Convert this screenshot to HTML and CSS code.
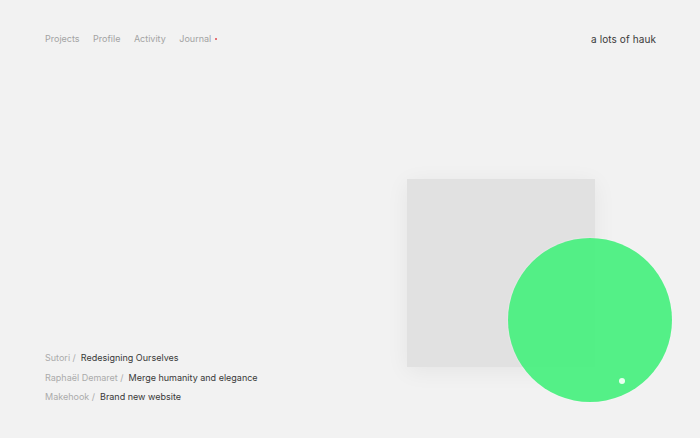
FILE: index.html
```html
<!DOCTYPE html>
<html>
<head>
<meta charset="utf-8">
<link rel="stylesheet" href="styles.css">
</head>
<body>
<div class="page">
  <header class="header">
    <nav class="nav">
      <a class="nav-link">Projects</a>
      <a class="nav-link">Profile</a>
      <a class="nav-link">Activity</a>
      <a class="nav-link journal">Journal<span class="dot"></span></a>
    </nav>
    <div class="brand">a lots of hauk</div>
  </header>
  <main class="main">
    <ul class="list">
      <li class="item"><span class="client">Sutori /</span><span class="title">Redesigning Ourselves</span></li>
      <li class="item"><span class="client">Raphaël Demaret /</span><span class="title">Merge humanity and elegance</span></li>
      <li class="item"><span class="client">Makehook /</span><span class="title">Brand new website</span></li>
    </ul>
    <div class="visual">
      <div class="square"></div>
      <div class="circle"><span class="spot"></span></div>
    </div>
  </main>
</div>
</body>
</html>
```
FILE: styles.css
```css
html, body {
  margin: 0;
  padding: 0;
  background: #f2f2f2;
}
body {
  font-family: Inter, "Noto Sans", sans-serif;
  -webkit-font-smoothing: antialiased;
}
.page {
  height: 438px;
  display: flex;
  flex-direction: column;
  box-sizing: border-box;
  padding: 32px 44px 34px 45px;
}
.header {
  display: flex;
  justify-content: space-between;
  align-items: center;
  height: 13px;
}
.nav {
  display: flex;
  gap: 13.5px;
}
.nav-link {
  font-size: 9px;
  color: #a3a3a3;
}
.journal {
  display: inline-flex;
  align-items: center;
}
.dot {
  width: 2px;
  height: 2px;
  border-radius: 50%;
  background: #e0484f;
  margin-left: 4px;
}
.brand {
  font-size: 10px;
  color: #3a3a3a;
  letter-spacing: 0.1px;
}
.main {
  flex: 1;
  display: flex;
  justify-content: space-between;
  align-items: flex-end;
}
.list {
  list-style: none;
  margin: 0 0 1px 0;
  padding: 0;
  display: flex;
  flex-direction: column;
  gap: 7.5px;
}
.item {
  font-size: 9px;
  line-height: 12px;
  display: flex;
  gap: 5px;
}
.client {
  color: #ababab;
}
.title {
  color: #383838;
}
.visual {
  position: relative;
  width: 265px;
  height: 223px;
  margin-right: -16px;
  margin-bottom: 2px;
}
.square {
  width: 188px;
  height: 188px;
  background: #e1e1e1;
  box-shadow: 0 4px 22px rgba(0, 0, 0, 0.06);
}
.circle {
  position: absolute;
  right: 0;
  bottom: 0;
  width: 164px;
  height: 164px;
  border-radius: 50%;
  background: rgba(70, 240, 126, 0.92);
  box-shadow: 0 0 2px rgba(255, 255, 255, 0.6);
}
.spot {
  position: absolute;
  left: 111px;
  top: 140px;
  width: 6px;
  height: 6px;
  border-radius: 50%;
  background: #eafff0;
}
```
